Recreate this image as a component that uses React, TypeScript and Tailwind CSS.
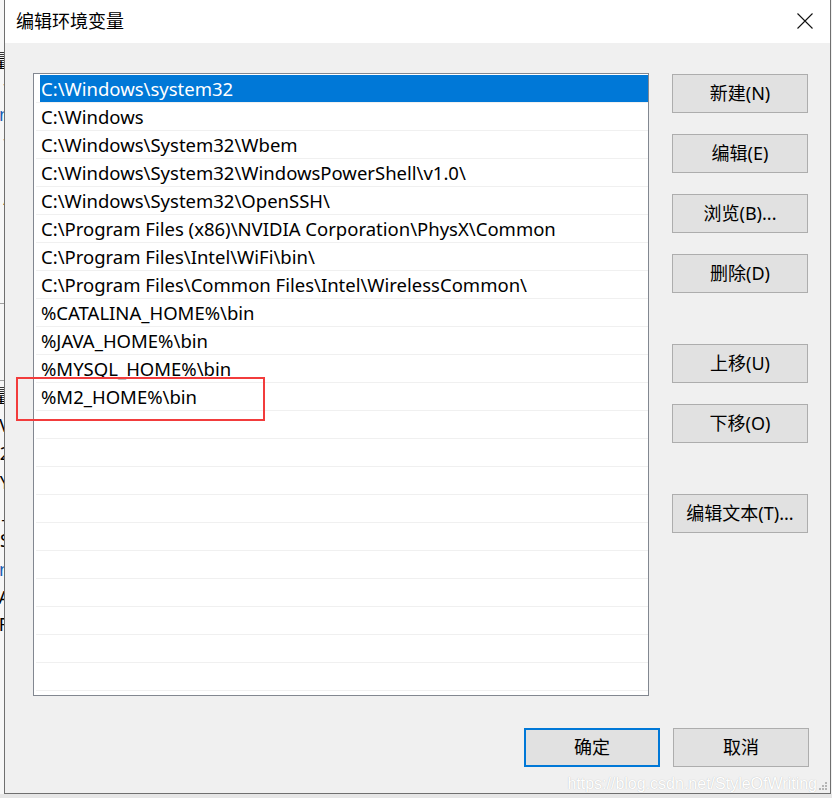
import React from "react";

const items = [
  "C:\\Windows\\system32",
  "C:\\Windows",
  "C:\\Windows\\System32\\Wbem",
  "C:\\Windows\\System32\\WindowsPowerShell\\v1.0\\",
  "C:\\Windows\\System32\\OpenSSH\\",
  "C:\\Program Files (x86)\\NVIDIA Corporation\\PhysX\\Common",
  "C:\\Program Files\\Intel\\WiFi\\bin\\",
  "C:\\Program Files\\Common Files\\Intel\\WirelessCommon\\",
  "%CATALINA_HOME%\\bin",
  "%JAVA_HOME%\\bin",
  "%MYSQL_HOME%\\bin",
  "%M2_HOME%\\bin",
];

const totalRows = 22;

const font = { fontFamily: '"Noto Sans", "Noto Sans CJK SC", sans-serif' };

function Btn({ label, className = "" }: { label: string; className?: string }) {
  return (
    <div
      className={
        "w-[136px] h-[39px] flex items-center justify-center bg-[#e1e1e1] border border-[#adadad] text-[18px] text-black " +
        className
      }
    >
      {label}
    </div>
  );
}

const stripTop: { h: number; t: string; c?: string }[] = [
  { h: 48, t: "" },
  { h: 26, t: "量" },
  { h: 26, t: "t" },
  { h: 28, t: "n", c: "text-[#1a5fb4]" },
  { h: 28, t: "t" },
  { h: 28, t: "l" },
  { h: 28, t: "/" },
];

const stripBottom: { h: number; t: string; c?: string }[] = [
  { h: 30, t: "量" },
  { h: 28, t: "V" },
  { h: 28, t: "2" },
  { h: 30, t: "Y" },
  { h: 28, t: "_" },
  { h: 30, t: "S" },
  { h: 28, t: "n", c: "text-[#1a5fb4]" },
  { h: 28, t: "A" },
  { h: 26, t: "R" },
];

export default function App() {
  return (
    <div className="w-[832px] h-[798px] overflow-hidden bg-[#e9e9e9] flex flex-col" style={font}>
      <div className="flex h-[794px]">
        {/* left background strip */}
        <div className="w-[4px] h-full bg-[#f7f7f7] overflow-hidden flex flex-col text-[18px] leading-none text-black">
          {stripTop.map((s, i) => (
            <div key={i} className="flex items-center justify-end" style={{ height: s.h }}>
              <span className={"shrink-0 -mr-[6px] " + (s.c ?? "")}>{s.t}</span>
            </div>
          ))}
          <div className="h-[92px] border-b border-[#a0a0a0]" />
          <div className="h-[77px] border-b border-[#a0a0a0]" />
          {stripBottom.map((s, i) => (
            <div key={i} className="flex items-center justify-end" style={{ height: s.h }}>
              <span className={"shrink-0 -mr-[6px] " + (s.c ?? "")}>{s.t}</span>
            </div>
          ))}
        </div>

        {/* dialog */}
        <div className="w-[827px] h-full border-l border-r border-b border-[#6f6f6f] flex flex-col bg-[#f0f0f0]">
          {/* title bar */}
          <div className="h-[43px] bg-white flex items-center justify-between pl-[11px] pr-[17px]">
            <span className="text-[18px] text-black leading-none -mt-[2px]">编辑环境变量</span>
            <svg width="16" height="16" viewBox="0 0 16 16" className="-mt-[2px]">
              <path d="M0.5 0.5 L15.5 15.5 M15.5 0.5 L0.5 15.5" stroke="#111" strokeWidth="1.1" fill="none" />
            </svg>
          </div>

          {/* body */}
          <div className="flex-1 flex flex-col pl-[28px] pt-[30px] relative">
            <div className="flex">
              {/* list box */}
              <div className="w-[616px] h-[623px] border border-[#828790] bg-white pt-[1px] pl-[1px] overflow-hidden text-[18.5px]">
                {Array.from({ length: totalRows }).map((_, i) => {
                  const text = items[i] ?? "";
                  const selected = i === 0;
                  return (
                    <div key={i} className="h-[28px] border-b border-[#f0f0f0] ml-[1px] flex">
                      <div
                        className={
                          selected
                            ? "flex-1 flex items-center whitespace-nowrap pt-[1px] bg-[#0078d7] text-white ml-[4px] pl-[1px]"
                            : "flex-1 flex items-center whitespace-nowrap pt-[1px] text-black pl-[5px]"
                        }
                      >
                        {text}
                      </div>
                    </div>
                  );
                })}
              </div>

              {/* right buttons */}
              <div className="ml-[23px] pt-[1px] flex flex-col">
                <Btn label="新建(N)" />
                <Btn label="编辑(E)" className="mt-[21px]" />
                <Btn label="浏览(B)..." className="mt-[21px]" />
                <Btn label="删除(D)" className="mt-[21px]" />
                <Btn label="上移(U)" className="mt-[51px]" />
                <Btn label="下移(O)" className="mt-[21px]" />
                <Btn label="编辑文本(T)..." className="mt-[51px]" />
              </div>
            </div>

            {/* footer */}
            <div className="flex justify-end gap-[13px] mt-[32px] pr-[21px]">
              <div className="w-[136px] h-[39px] flex items-center justify-center bg-[#e1e1e1] border-2 border-[#0078d7] text-[18px] text-black">
                确定
              </div>
              <Btn label="取消" />
            </div>

            {/* red highlight box (annotation over content) */}
            <div className="absolute left-[11px] top-[334px] w-[249px] h-[44px] border-2 border-[#f23c3c]" />

            {/* watermark */}
            <div className="absolute right-[2px] bottom-[1px] flex items-end gap-[1px]">
              <span
                className="text-[16px] leading-none text-white"
                style={{ fontFamily: '"Liberation Sans", Arial, sans-serif', textShadow: "0 0 1px rgba(0,0,0,0.25)" }}
              >
                https://blog.csdn.net/StyleOfWriting
              </span>
              <svg width="10" height="10" viewBox="0 0 10 10" className="mb-[1px]">
                <rect x="7" y="1" width="2" height="2" fill="#b5b5b5" />
                <rect x="4" y="4" width="2" height="2" fill="#b5b5b5" />
                <rect x="7" y="4" width="2" height="2" fill="#b5b5b5" />
                <rect x="1" y="7" width="2" height="2" fill="#b5b5b5" />
                <rect x="4" y="7" width="2" height="2" fill="#b5b5b5" />
                <rect x="7" y="7" width="2" height="2" fill="#b5b5b5" />
              </svg>
            </div>
          </div>
        </div>

        {/* right strip */}
        <div className="w-[1px] h-full bg-[#f0f0f0]" />
      </div>
      <div className="flex-1 bg-[#e6e6e6]" />
    </div>
  );
}
